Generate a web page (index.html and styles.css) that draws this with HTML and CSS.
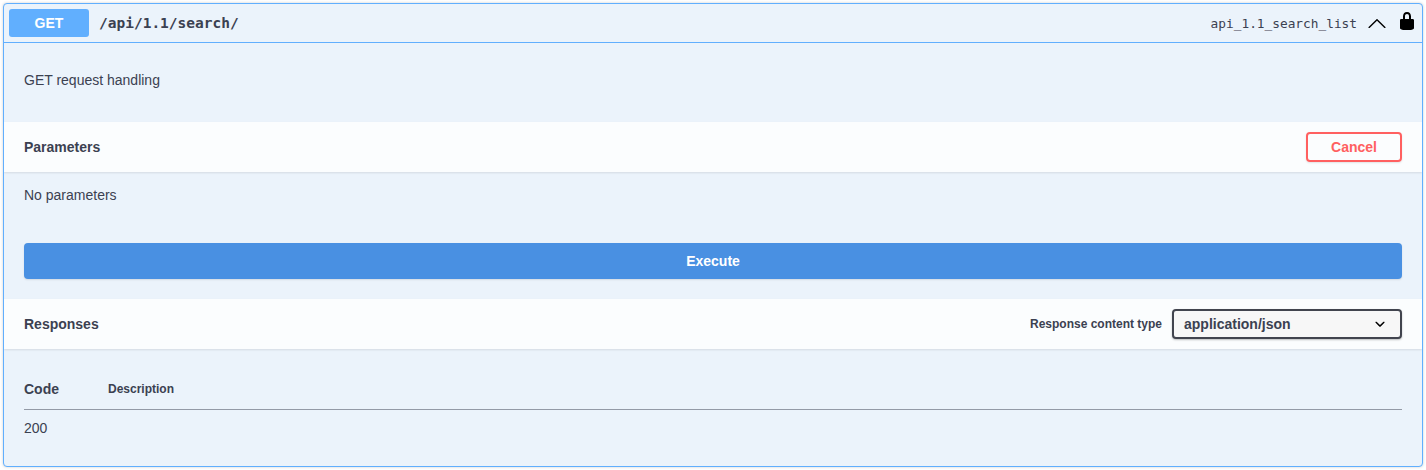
FILE: index.html
```html
<!DOCTYPE html>
<html lang="en">
<head>
<meta charset="utf-8">
<title>GET /api/1.1/search/</title>
<link rel="stylesheet" href="styles.css">
</head>
<body>
<div class="opblock">
  <div class="summary">
    <span class="method">GET</span>
    <span class="path">/api/1.1/search/</span>
    <span class="operation-id">api_1.1_search_list</span>
    <svg class="arrow" width="20" height="20" viewBox="0 0 20 20"><path d="M 17.418 14.908 C 17.69 15.176 18.127 15.176 18.397 14.908 C 18.667 14.64 18.668 14.209 18.397 13.941 L 10.489 6.133 C 10.219 5.865 9.782 5.865 9.511 6.133 L 1.603 13.941 C 1.332 14.209 1.332 14.64 1.603 14.908 C 1.873 15.176 2.311 15.176 2.581 14.908 L 10.001 7.807 Z"/></svg>
    <svg class="lock" width="20" height="20" viewBox="0 0 20 20"><path d="M15.8 8H14V5.6C14 2.703 12.665 1 10 1 7.334 1 6 2.703 6 5.6V8H4c-.553 0-1 .646-1 1.199V17c0 .549.428 1.139.951 1.307l1.197.387C5.672 18.861 6.55 19 7.1 19h5.8c.549 0 1.428-.139 1.951-.307l1.196-.387c.524-.167.953-.757.953-1.306V9.199C17 8.646 16.352 8 15.8 8zM12 8H8V5.199C8 3.754 8.797 3 10 3c1.203 0 2 .754 2 2.199V8z"/></svg>
  </div>
  <div class="description">GET request handling</div>
  <div class="section-header params-header">
    <h4 class="section-title">Parameters</h4>
    <button class="cancel" type="button">Cancel</button>
  </div>
  <div class="no-params">No parameters</div>
  <div class="execute-wrap"><button class="execute" type="button">Execute</button></div>
  <div class="section-header responses-header">
    <h4 class="section-title">Responses</h4>
    <div class="content-type">
      <span class="content-type-label">Response content type</span>
      <div class="select">
        <span>application/json</span>
        <svg class="select-arrow" width="20" height="20" viewBox="0 0 20 20"><path d="M13.418 7.859c.271-.268.709-.268.978 0 .27.268.272.701 0 .969l-3.908 3.83c-.27.268-.707.268-.979 0l-3.908-3.83c-.27-.267-.27-.701 0-.969.271-.268.709-.268.978 0L10 11l3.418-3.141z"/></svg>
      </div>
    </div>
  </div>
  <div class="responses">
    <div class="responses-head">
      <span class="col-code">Code</span>
      <span class="col-desc">Description</span>
    </div>
    <div class="response-code">200</div>
  </div>
</div>
</body>
</html>
```

FILE: styles.css
```css
* { box-sizing: border-box; }
html, body { margin: 0; padding: 0; background: #fff; }
body {
  padding: 3px;
  font-family: "Liberation Sans", Arial, sans-serif;
  color: #3b4151;
}
.opblock {
  height: 464px;
  border: 1px solid #61affe;
  border-radius: 4px;
  background: #ebf3fb;
  box-shadow: 0 0 3px rgba(0, 0, 0, .19);
  overflow: hidden;
}
.summary {
  display: flex;
  align-items: center;
  height: 39px;
  padding: 0 5px;
  border-bottom: 1px solid #61affe;
}
.method {
  width: 80px;
  height: 28px;
  border-radius: 3px;
  background: #61affe;
  color: #fff;
  font-size: 14px;
  font-weight: 700;
  line-height: 28px;
  text-align: center;
}
.path {
  padding-left: 10px;
  font-family: "DejaVu Sans Mono", monospace;
  font-size: 14.5px;
  font-weight: 700;
}
.operation-id {
  margin-left: auto;
  font-family: "DejaVu Sans Mono", monospace;
  font-size: 12.8px;
}
.arrow { margin-left: 10px; margin-bottom: 1px; fill: #000; }
.lock { margin-left: 10px; margin-bottom: 4px; fill: #000; }
.description {
  height: 79px;
  padding: 28px 20px 0;
  font-size: 14px;
  line-height: 19px;
}
.section-header {
  display: flex;
  align-items: center;
  justify-content: space-between;
  height: 50px;
  padding: 0 20px;
  background: rgba(255, 255, 255, .8);
  box-shadow: 0 1px 2px rgba(0, 0, 0, .1);
}
.section-title {
  margin: 0;
  font-size: 14px;
  font-weight: 700;
}
.cancel {
  width: 96px;
  height: 30px;
  padding: 0;
  border: 2px solid #ff6060;
  border-radius: 4px;
  background: transparent;
  box-shadow: 0 1px 2px rgba(0, 0, 0, .1);
  color: #ff6060;
  font: 700 14px "Liberation Sans", Arial, sans-serif;
}
.no-params {
  height: 71px;
  padding-top: 14px;
  padding-left: 20px;
  font-size: 14px;
  line-height: 18px;
}
.execute-wrap {
  height: 56px;
  padding: 0 20px;
}
.execute {
  display: block;
  width: 100%;
  height: 36px;
  padding: 0;
  border: 0;
  border-radius: 4px;
  background: #4990e2;
  box-shadow: 0 1px 2px rgba(0, 0, 0, .1);
  color: #fff;
  font: 700 14px "Liberation Sans", Arial, sans-serif;
}
.content-type {
  display: flex;
  align-items: center;
  gap: 10px;
}
.content-type-label {
  font-size: 12px;
  font-weight: 700;
}
.select {
  display: flex;
  align-items: center;
  justify-content: space-between;
  width: 230px;
  height: 30px;
  padding: 0 10px;
  border: 2px solid #41444e;
  border-radius: 4px;
  background: #f7f7f7;
  box-shadow: 0 1px 2px rgba(0, 0, 0, .25);
  font-size: 14px;
  font-weight: 700;
}
.select-arrow { fill: #000; }
.responses { padding: 0 20px; }
.responses-head {
  display: flex;
  align-items: flex-start;
  box-sizing: content-box;
  height: 29px;
  padding-top: 31px;
  border-bottom: 1px solid rgba(59, 65, 81, .5);
}
.col-code {
  width: 84px;
  font-size: 14px;
  font-weight: 700;
  line-height: 18px;
}
.col-desc {
  font-size: 12px;
  font-weight: 700;
  line-height: 18px;
}
.response-code {
  padding-top: 9px;
  font-size: 14px;
  line-height: 18px;
}
```
